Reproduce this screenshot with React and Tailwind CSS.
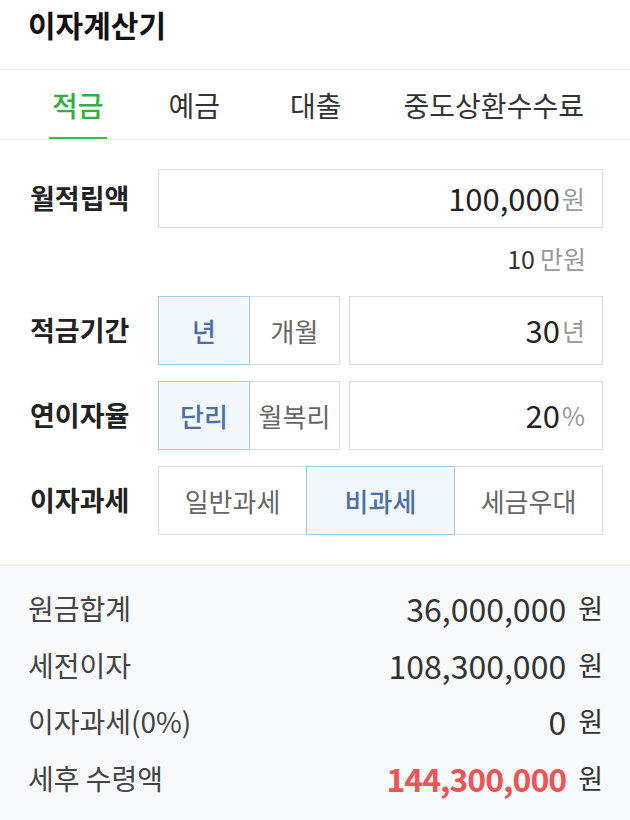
import React from 'react';

const tabs = [
  { name: '적금', cls: 'ml-[49px]' },
  { name: '예금', cls: 'ml-[59px]' },
  { name: '대출', cls: 'ml-[64px]' },
  { name: '중도상환수수료', cls: 'ml-[56px]' },
];

const results = [
  { label: '원금합계', value: '36,000,000' },
  { label: '세전이자', value: '108,300,000' },
  { label: '이자과세(0%)', value: '0' },
  { label: '세후 수령액', value: '144,300,000', highlight: true },
];

function Segment({ children, active, className = '' }) {
  return (
    <div
      className={
        'flex items-center justify-center border text-[26px] ' +
        (active
          ? 'z-10 border-[#a9c9e2] bg-[#f3f8fd] font-medium text-[#4d6fa3]'
          : 'border-[#dedede] bg-white text-[#666]') +
        ' ' +
        className
      }
    >
      {children}
    </div>
  );
}

function ValueBox({ value, unit, className = '' }) {
  return (
    <div className={'flex items-center justify-end border border-[#dedede] bg-white pr-[17px] ' + className}>
      <span className="text-[31px] text-[#222]">{value}</span>
      <span className="ml-[2px] text-[25px] text-[#999]">{unit}</span>
    </div>
  );
}

export default function App() {
  return (
    <div className="w-[630px] min-h-[820px] bg-white font-['Noto_Sans_CJK_KR','Noto_Sans',sans-serif]">
      {/* Header */}
      <div className="flex h-[70px] items-start border-b border-[#ececec] pt-[2px] pl-[28px]">
        <h1 className="text-[30px] font-bold text-[#111]">이자계산기</h1>
      </div>

      {/* Tabs */}
      <div className="flex h-[70px] items-stretch border-b border-[#ececec]">
        {tabs.map((tab, i) => (
          <div
            key={tab.name}
            className={
              'flex items-center px-[3px] text-[28px] ' +
              tab.cls +
              ' ' +
              (i === 0 ? 'border-b-2 border-[#3bbd4a] pt-[2px] font-medium text-[#2fb13f]' : 'text-[#333]')
            }
          >
            {tab.name}
          </div>
        ))}
      </div>

      {/* Form */}
      <div className="flex flex-col px-[27px] pt-[29px] pb-[29px]">
        <div className="flex items-center">
          <div className="w-[131px] pl-[3px] text-[27px] font-bold text-[#222]">월적립액</div>
          <ValueBox value="100,000" unit="원" className="h-[59px] flex-1" />
        </div>
        <div className="flex h-[68px] items-center justify-end pr-[17px] pb-[7px]">
          <span className="text-[25px] text-[#333]">10</span>
          <span className="ml-[5px] text-[25px] text-[#999]">만원</span>
        </div>

        <div className="flex flex-col gap-[16px]">
          <div className="flex h-[69px] items-stretch">
            <div className="flex w-[131px] items-center pl-[3px] text-[27px] font-bold text-[#222]">적금기간</div>
            <div className="flex w-[182px]">
              <Segment active className="w-[92px]">년</Segment>
              <Segment className="-ml-px w-[91px]">개월</Segment>
            </div>
            <ValueBox value="30" unit="년" className="ml-[9px] flex-1" />
          </div>

          <div className="flex h-[69px] items-stretch">
            <div className="flex w-[131px] items-center pl-[3px] text-[27px] font-bold text-[#222]">연이자율</div>
            <div className="flex w-[182px]">
              <Segment active className="w-[92px]">단리</Segment>
              <Segment className="-ml-px w-[91px]">월복리</Segment>
            </div>
            <ValueBox value="20" unit="%" className="ml-[9px] flex-1" />
          </div>

          <div className="flex h-[69px] items-stretch">
            <div className="flex w-[131px] items-center pl-[3px] text-[27px] font-bold text-[#222]">이자과세</div>
            <div className="flex flex-1">
              <Segment className="flex-1">일반과세</Segment>
              <Segment active className="-ml-px flex-1">비과세</Segment>
              <Segment className="-ml-px flex-1">세금우대</Segment>
            </div>
          </div>
        </div>
      </div>

      {/* Results */}
      <div className="flex flex-col border-t-2 border-[#eef0f0] bg-[#f8f9fb] px-[27px] pt-[14px] pb-[16px]">
        {results.map((r) => (
          <div key={r.label} className="flex h-[56.5px] items-center justify-between">
            <span className="pl-[1px] text-[28px] text-[#444]">{r.label}</span>
            <div className="flex items-center">
              <span
                className={
                  'text-[32px] ' +
                  (r.highlight ? 'font-bold tracking-[-1px] text-[#ee5356]' : 'text-[#333]')
                }
              >
                {r.value}
              </span>
              <span className="ml-[12px] text-[27px] text-[#333]">원</span>
            </div>
          </div>
        ))}
      </div>
    </div>
  );
}
